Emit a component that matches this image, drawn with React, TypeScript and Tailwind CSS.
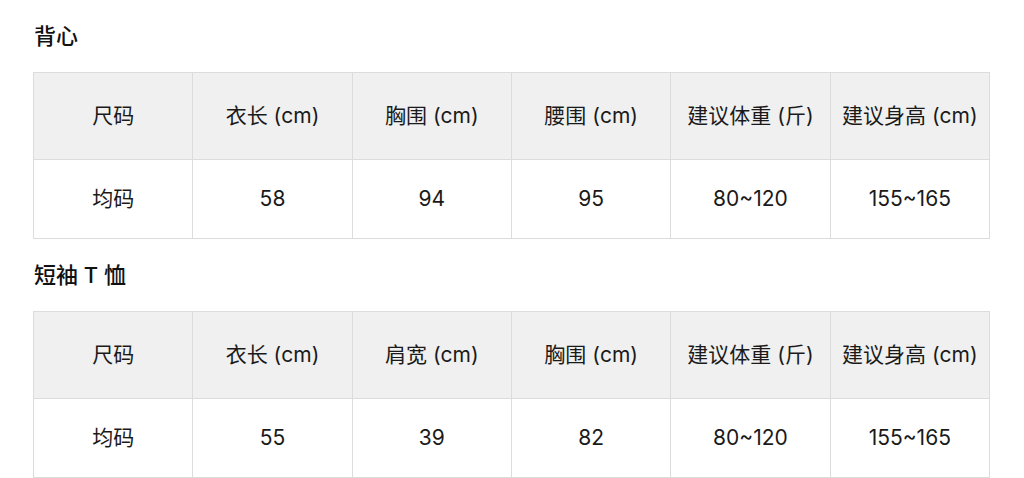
import React from 'react';

interface SizeTable {
  title: string;
  headers: string[];
  row: string[];
}

const tables: SizeTable[] = [
  {
    title: '背心',
    headers: ['尺码', '衣长 (cm)', '胸围 (cm)', '腰围 (cm)', '建议体重 (斤)', '建议身高 (cm)'],
    row: ['均码', '58', '94', '95', '80~120', '155~165'],
  },
  {
    title: '短袖 T 恤',
    headers: ['尺码', '衣长 (cm)', '肩宽 (cm)', '胸围 (cm)', '建议体重 (斤)', '建议身高 (cm)'],
    row: ['均码', '55', '39', '82', '80~120', '155~165'],
  },
];

const SizeBlock: React.FC<{ table: SizeTable }> = ({ table }) => (
  <section>
    <div className="h-[72px] flex items-center pt-[1px] pl-px">
      <h2 className="text-[22px] font-medium text-[#111]">{table.title}</h2>
    </div>
    <table className="table-fixed border-collapse w-[957px] text-[21px] text-[#1a1a1a]">
      <thead>
        <tr className="h-[87px] bg-[#f0f0f0]">
          {table.headers.map((h) => (
            <th key={h} className="border border-[#dcdcdc] font-normal text-center whitespace-nowrap">
              {h}
            </th>
          ))}
        </tr>
      </thead>
      <tbody>
        <tr className="h-[79px] bg-white">
          {table.row.map((c, i) => (
            <td key={i} className="border border-[#dcdcdc] text-center">
              {c}
            </td>
          ))}
        </tr>
      </tbody>
    </table>
  </section>
);

export default function App() {
  return (
    <div
      className="w-[1024px] h-[478px] bg-white px-[33px] overflow-hidden"
      style={{ fontFamily: 'Inter, "Noto Sans CJK SC", sans-serif' }}
    >
      {tables.map((t) => (
        <SizeBlock key={t.title} table={t} />
      ))}
    </div>
  );
}
